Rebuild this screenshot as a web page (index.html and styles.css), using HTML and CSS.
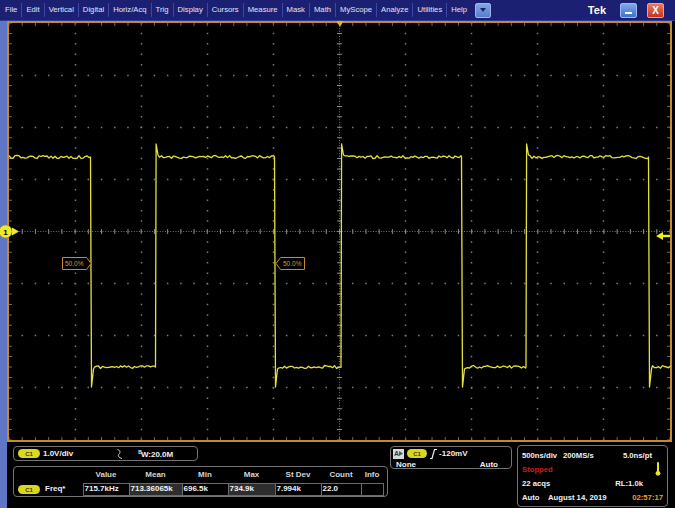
FILE: index.html
```html
<!DOCTYPE html>
<html lang="en">
<head>
    <meta charset="UTF-8">
    <meta name="viewport" content="width=device-width, initial-scale=1.0">
    <title>Tek Scope</title>
    <link rel="stylesheet" href="styles.css">
</head>
<body>
    <div class="menubar">
        <span class="menu-item">File</span>
        <span class="menu-item">Edit</span>
        <span class="menu-item">Vertical</span>
        <span class="menu-item">Digital</span>
        <span class="menu-item">Horiz/Acq</span>
        <span class="menu-item">Trig</span>
        <span class="menu-item">Display</span>
        <span class="menu-item">Cursors</span>
        <span class="menu-item">Measure</span>
        <span class="menu-item">Mask</span>
        <span class="menu-item">Math</span>
        <span class="menu-item">MyScope</span>
        <span class="menu-item">Analyze</span>
        <span class="menu-item">Utilities</span>
        <span class="menu-item">Help</span>
        <span class="menu-drop"><svg width="6" height="4" viewBox="0 0 6 4"><polygon points="0,0 6,0 3,4"/></svg></span>
        <span class="brand">Tek</span>
        <span class="win-btn min"></span>
        <span class="win-btn close">X</span>
    </div>

    <div class="main">
        <div class="strip"></div>
        <div class="workspace">
            <div class="scope">
                <svg class="graticule" width="661" height="417" viewBox="0 0 661 417">
                    <!-- dotted division lines -->
                    <g class="dots-v">
                        <line x1="66.5" y1="0" x2="66.5" y2="417"/>
                        <line x1="132.5" y1="0" x2="132.5" y2="417"/>
                        <line x1="198.5" y1="0" x2="198.5" y2="417"/>
                        <line x1="264.5" y1="0" x2="264.5" y2="417"/>
                        <line x1="396.5" y1="0" x2="396.5" y2="417"/>
                        <line x1="462.5" y1="0" x2="462.5" y2="417"/>
                        <line x1="528.5" y1="0" x2="528.5" y2="417"/>
                        <line x1="594.5" y1="0" x2="594.5" y2="417"/>
                    </g>
                    <g class="dots-h">
                        <line x1="0" y1="52.5" x2="661" y2="52.5"/>
                        <line x1="0" y1="104.5" x2="661" y2="104.5"/>
                        <line x1="0" y1="156.5" x2="661" y2="156.5"/>
                        <line x1="0" y1="260.5" x2="661" y2="260.5"/>
                        <line x1="0" y1="312.5" x2="661" y2="312.5"/>
                        <line x1="0" y1="364.5" x2="661" y2="364.5"/>
                    </g>

                    <!-- centre cross with ticks -->
                    <line class="axis axis-h" x1="0" y1="208.5" x2="661" y2="208.5"/>
                    <line class="axis axis-v" x1="330.5" y1="0" x2="330.5" y2="417"/>
                    <line class="ticks-h" x1="0" y1="208.5" x2="661" y2="208.5"/>
                    <line class="ticks-v" x1="330.5" y1="0" x2="330.5" y2="417"/>

                    <!-- edge ticks -->
                    <line class="ticks-h edge" x1="0" y1="1.5" x2="661" y2="1.5"/>
                    <line class="ticks-h edge" x1="0" y1="415.5" x2="661" y2="415.5"/>
                    <line class="ticks-v edge" x1="1.5" y1="0" x2="1.5" y2="417"/>
                    <line class="ticks-v edge" x1="659.5" y1="0" x2="659.5" y2="417"/>

                    <path id="trace" class="trace" d=""/>

                    <g class="ref-label">
                        <polygon points="53.5,234.5 77.5,234.5 82,240.5 77.5,246.5 53.5,246.5"/>
                        <text x="56" y="243.3">50.0%</text>
                    </g>
                    <g class="ref-label">
                        <polygon points="267,240.5 271.5,234.5 295.5,234.5 295.5,246.5 271.5,246.5"/>
                        <text x="274" y="243.3">50.0%</text>
                    </g>

                    <polygon class="trig-pos" points="327.5,-2 334.5,-2 331,4"/>
                    <g class="trig-level">
                        <polygon points="647,213 654,209 654,217"/>
                        <rect x="653" y="211.8" width="8" height="2.4"/>
                    </g>
                    <g class="ch-marker">
                        <circle cx="-3.5" cy="208.5" r="6.5"/>
                        <polygon points="3,204.5 10,208.5 3,212.5"/>
                        <text x="-3.5" y="211.5">1</text>
                    </g>
                </svg>
            </div>

            <div class="panels">
                <div class="left-col">
                    <div class="panel chan">
                        <span class="pill">C1</span>
                        <span class="chan-scale">1.0V/div</span>
                        <svg class="chan-icon" width="8" height="10" viewBox="0 0 8 10"><path d="M1.5 0.5 C4.5 1.5, 4.5 3.5, 3 5 S2.5 8.5, 6 9.5"/></svg>
                        <span class="chan-bw"><sup>B</sup>W:20.0M</span>
                    </div>
                    <div class="panel meas">
                        <table>
                            <colgroup>
                                <col class="c-label">
                                <col class="c-value">
                                <col class="c-mean">
                                <col class="c-min">
                                <col class="c-max">
                                <col class="c-dev">
                                <col class="c-count">
                                <col class="c-info">
                            </colgroup>
                            <tr>
                                <th></th>
                                <th>Value</th>
                                <th>Mean</th>
                                <th>Min</th>
                                <th>Max</th>
                                <th>St Dev</th>
                                <th>Count</th>
                                <th>Info</th>
                            </tr>
                            <tr>
                                <td class="m-label"><span class="pill">C1</span><span class="m-name">Freq*</span></td>
                                <td>715.7kHz</td>
                                <td class="shade">713.36065k</td>
                                <td>696.5k</td>
                                <td class="shade">734.9k</td>
                                <td>7.994k</td>
                                <td>22.0</td>
                                <td></td>
                            </tr>
                        </table>
                    </div>
                </div>

                <div class="panel trig">
                    <div class="trig-row">
                        <span class="trig-src">A<svg width="4" height="5" viewBox="0 0 4 5"><polygon points="0,0 4,2.5 0,5"/></svg></span>
                        <span class="pill pill-sm">C1</span>
                        <svg class="edge-icon" width="7" height="10" viewBox="0 0 7 10"><path d="M0 9.5 H2 L4.5 0.5 H7"/></svg>
                        <span>-120mV</span>
                    </div>
                    <div class="trig-row trig-mode">
                        <span>None</span>
                        <span>Auto</span>
                    </div>
                </div>

                <div class="panel horiz">
                    <div class="h-row">
                        <span class="h-first">500ns/div</span>
                        <span>200MS/s</span>
                        <span class="h-pt">5.0ns/pt</span>
                    </div>
                    <div class="h-row">
                        <span class="stopped">Stopped</span>
                        <svg class="thermo" width="6" height="14" viewBox="0 0 6 14"><rect x="2" y="0" width="2" height="10" rx="1"/><circle cx="3" cy="11.3" r="2.4"/></svg>
                    </div>
                    <div class="h-row">
                        <span>22 acqs</span>
                        <span class="h-rl">RL:1.0k</span>
                    </div>
                    <div class="h-row">
                        <span class="h-mode">Auto</span>
                        <span>August 14, 2019</span>
                        <span class="h-time">02:57:17</span>
                    </div>
                </div>
            </div>
        </div>
    </div>

    <script>
        // Draw the captured square wave with a bit of noise on the flat parts
        const HIGH = 134;
        const LOW = 344;
        const edges = [
            { x: 81.5, dir: 'fall' },
            { x: 146.5, dir: 'rise' },
            { x: 265.5, dir: 'fall' },
            { x: 332, dir: 'rise' },
            { x: 452.5, dir: 'fall' },
            { x: 517, dir: 'rise' },
            { x: 639.5, dir: 'fall' }
        ];

        let seed = 12345;
        function rand() {
            seed = (seed * 16807) % 2147483647;
            return seed / 2147483647;
        }

        function flat(points, x0, x1, y) {
            for (let x = x0; x < x1; x += 2) {
                points.push([x, y + (rand() - 0.5) * 3]);
            }
        }

        const points = [];
        let cur = 0;
        let level = HIGH;

        edges.forEach(edge => {
            flat(points, cur, edge.x, level);
            if (edge.dir === 'fall') {
                points.push([edge.x, HIGH]);
                points.push([edge.x + 1, LOW + 20]);
                points.push([edge.x + 3, LOW + 2]);
                level = LOW;
            } else {
                points.push([edge.x, LOW]);
                points.push([edge.x + 0.6, HIGH - 13]);
                points.push([edge.x + 2.5, HIGH - 2]);
                level = HIGH;
            }
            cur = edge.x + 4;
        });
        flat(points, cur, 662, level);

        document.getElementById('trace').setAttribute('d',
            'M' + points.map(p => p[0].toFixed(1) + ' ' + p[1].toFixed(1)).join(' L'));
    </script>
</body>
</html>
```

FILE: styles.css
```css
* {
    box-sizing: border-box;
}

body {
    margin: 0;
    width: 675px;
    height: 508px;
    overflow: hidden;
    background: #000;
    font-family: "Liberation Sans", Arial, sans-serif;
    color: #f2f2f2;
}

/* top menu */
.menubar {
    display: flex;
    align-items: center;
    height: 21px;
    padding-left: 1px;
    background: #1c2072;
    border-bottom: 1px solid #2e3a98;
    color: #e2e5f5;
    font-size: 7.7px;
}

.menu-item {
    height: 14px;
    line-height: 14px;
    padding: 0 4px;
    white-space: nowrap;
}

.menu-item + .menu-item {
    border-left: 1px solid #3e47a6;
}

.menu-drop {
    display: flex;
    align-items: center;
    justify-content: center;
    width: 16px;
    height: 15px;
    margin-left: 4px;
    background: linear-gradient(#86a6e4, #557ecf);
    border: 1px solid #9bb6ec;
    border-radius: 2px;
}

.menu-drop polygon {
    fill: #1a2266;
}

.brand {
    margin-left: auto;
    font-size: 11px;
    font-weight: bold;
    color: #fff;
}

.win-btn {
    display: flex;
    align-items: flex-end;
    justify-content: center;
    width: 17px;
    height: 15px;
    border-radius: 2px;
}

.win-btn.min {
    margin-left: 14px;
    padding-bottom: 3px;
    background: linear-gradient(#7fa8ec, #3f72cf);
    border: 1px solid #9cbcf0;
}

.win-btn.min::after {
    content: "";
    width: 7px;
    height: 2px;
    background: #fff;
}

.win-btn.close {
    margin-left: 10px;
    margin-right: 11px;
    background: linear-gradient(#f07a5a, #c8321e);
    border: 1px solid #f2a088;
    color: #fff;
    font-size: 10px;
    font-weight: bold;
    line-height: 12px;
}

/* main area */
.main {
    display: flex;
    height: 487px;
}

.strip {
    width: 7px;
    background: #5f76c4;
}

.workspace {
    width: 665px;
}

.scope {
    height: 421px;
    border: 2px solid #c68a2e;
    background: #000;
}

.graticule {
    display: block;
    overflow: visible;
}

.dots-v line {
    stroke: #7c7c7c;
    stroke-width: 1.5;
    stroke-dasharray: 1.5 8.925;
    stroke-dashoffset: 0.75;
}

.dots-h line {
    stroke: #7c7c7c;
    stroke-width: 1.5;
    stroke-dasharray: 1.5 11.72;
    stroke-dashoffset: 0.75;
}

.axis {
    stroke: #747474;
    stroke-width: 1;
    stroke-dasharray: 1 1.6;
}

.ticks-h {
    stroke: #8a8a8a;
    stroke-width: 5;
    stroke-dasharray: 1 12.22;
    stroke-dashoffset: 0.5;
}

.ticks-v {
    stroke: #8a8a8a;
    stroke-width: 5;
    stroke-dasharray: 1 9.425;
    stroke-dashoffset: 0.5;
}

.ticks-h.edge,
.ticks-v.edge {
    stroke: #6a6a6a;
    stroke-width: 3;
}

.trace {
    fill: none;
    stroke: #e2e23a;
    stroke-width: 1.3;
    stroke-linejoin: round;
}

.ref-label polygon {
    fill: #000;
    stroke: #c88a2a;
    stroke-width: 1;
}

.ref-label text {
    font-family: "Liberation Sans", Arial, sans-serif;
    font-size: 6.5px;
    fill: #d99b2c;
}

.trig-pos {
    fill: #e8b020;
}

.trig-level polygon,
.trig-level rect {
    fill: #f0ee22;
}

.ch-marker circle {
    fill: #f0e82a;
    stroke: #a89a10;
    stroke-width: 0.8;
}

.ch-marker polygon {
    fill: #f0e82a;
}

.ch-marker text {
    font-family: "Liberation Sans", Arial, sans-serif;
    font-size: 8px;
    font-weight: bold;
    fill: #000;
    text-anchor: middle;
}

/* bottom readouts */
.panels {
    display: flex;
    align-items: flex-start;
    padding: 4px 0 0 6px;
    font-size: 8px;
    font-weight: bold;
}

.panel {
    border: 1px solid #747474;
    border-radius: 4px;
}

.left-col {
    display: flex;
    flex-direction: column;
    gap: 5px;
    width: 375px;
}

.pill {
    display: inline-flex;
    align-items: center;
    justify-content: center;
    width: 22px;
    height: 9px;
    border-radius: 5px;
    background: #d8d81e;
    color: #3c3c00;
    font-size: 6px;
    font-weight: bold;
}

.pill-sm {
    width: 20px;
}

.chan {
    display: flex;
    align-items: center;
    width: 185px;
    height: 15px;
    padding-left: 4px;
}

.chan-scale {
    margin-left: 3px;
}

.chan-icon {
    margin-left: 43px;
}

.chan-icon path {
    fill: none;
    stroke: #ddd;
    stroke-width: 1;
}

.chan-bw {
    margin-left: 14px;
}

.chan-bw sup {
    font-size: 5px;
    vertical-align: 3px;
    margin-right: -1px;
}

.meas {
    height: 31px;
}

.meas table {
    border-collapse: collapse;
    table-layout: fixed;
    width: 369px;
}

.c-label { width: 69px; }
.c-value { width: 46px; }
.c-mean { width: 53px; }
.c-min { width: 46px; }
.c-max { width: 47px; }
.c-dev { width: 46px; }
.c-count { width: 40px; }
.c-info { width: 22px; }

.meas th {
    height: 16px;
    padding: 0;
    color: #d6d6d6;
    text-align: center;
    font-size: 8px;
}

.meas td {
    height: 12px;
    padding: 0 1px;
    border: 1px solid #6a6a6a;
    line-height: 10px;
    white-space: nowrap;
    overflow: hidden;
}

.meas td.m-label {
    border: none;
    padding-left: 4px;
}

.meas td.shade {
    background: #2e2e2e;
}

.m-name {
    margin-left: 5px;
    vertical-align: 1px;
}

.trig {
    width: 122px;
    height: 23px;
    margin-left: 2px;
    padding: 1px 13px 0 2px;
}

.trig-row {
    display: flex;
    align-items: center;
    height: 11px;
}

.trig-src {
    display: inline-flex;
    align-items: center;
    height: 10px;
    padding: 0 1px;
    background: #d8d8d8;
    color: #333;
    font-size: 7px;
}

.trig-src polygon {
    fill: #555;
}

.trig-row .pill {
    margin-left: 3px;
}

.edge-icon {
    margin: 0 2px 0 3px;
}

.edge-icon path {
    fill: none;
    stroke: #f0f0f0;
    stroke-width: 1.2;
}

.trig-mode {
    justify-content: space-between;
    padding-left: 3px;
}

.horiz {
    width: 151px;
    height: 62px;
    margin: -1px 0 0 5px;
    padding: 2px 4px 0 4px;
    font-size: 7.7px;
}

.h-row {
    display: flex;
    align-items: center;
    height: 14px;
}

.h-first {
    width: 41px;
}

.h-pt {
    margin-left: auto;
    margin-right: 11px;
}

.stopped {
    color: #cc1f1f;
}

.thermo {
    margin-left: auto;
    margin-right: 2px;
}

.thermo rect,
.thermo circle {
    fill: #f0e02a;
}

.h-rl {
    margin-left: auto;
    margin-right: 20px;
}

.h-mode {
    width: 26px;
}

.h-time {
    margin-left: auto;
    color: #e9a21e;
}
```
